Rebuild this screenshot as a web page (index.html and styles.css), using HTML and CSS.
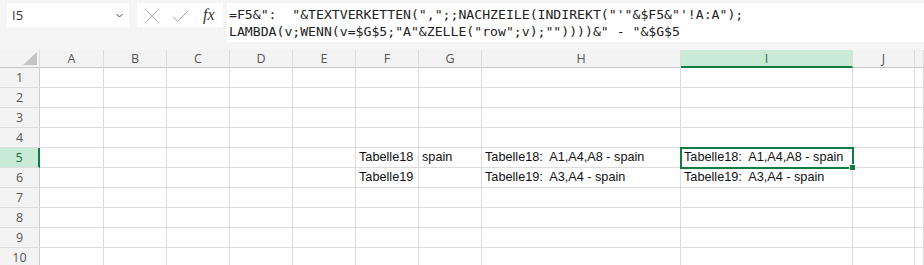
FILE: index.html
```html
<!DOCTYPE html>
<html lang="de">
<head>
  <meta charset="UTF-8" />
  <title>Tabelle</title>
  <link rel="stylesheet" href="styles.css">
</head>
<body>
  <!-- Name box + formula bar -->
  <div class="topbar">
    <div class="namebox">
      <span class="ref">I5</span>
      <svg class="chevron" width="7" height="5" viewBox="0 0 7 5"><path d="M0.5 1 L3.5 4 L6.5 1" fill="none" stroke="#444" stroke-width="1"/></svg>
    </div>
    <div class="fnbuttons">
      <svg width="55" height="24" viewBox="0 0 55 24">
        <path d="M0.5 7.5 L11.5 18.5 M11.5 7.5 L0.5 18.5" fill="none" stroke="#a6a6a6" stroke-width="1"/>
        <path d="M27 13.5 L31.5 18.5 L42 8" fill="none" stroke="#a6a6a6" stroke-width="1"/>
      </svg>
      <span class="fx">fx</span>
    </div>
    <div class="formula">
      <div class="fline">=F5&amp;":  "&amp;TEXTVERKETTEN(",";;NACHZEILE(INDIREKT("'"&amp;$F5&amp;"'!A:A");</div>
      <div class="fline">LAMBDA(v;WENN(v=$G$5;"A"&amp;ZELLE("row";v);""))))&amp;" - "&amp;$G$5</div>
    </div>
  </div>

  <!-- Sheet -->
  <div class="sheet">
    <div class="corner"><svg width="40" height="18" viewBox="0 0 40 18"><polygon points="23,15 37,15 37,2" fill="#c4c4c4"/></svg></div>
    <div class="colhead">A</div><div class="colhead">B</div><div class="colhead">C</div><div class="colhead">D</div><div class="colhead">E</div><div class="colhead">F</div><div class="colhead">G</div><div class="colhead">H</div><div class="colhead active">I</div><div class="colhead">J</div><div class="colhead"></div>

    <div class="rowhead">1</div><div class="cell"></div><div class="cell"></div><div class="cell"></div><div class="cell"></div><div class="cell"></div><div class="cell"></div><div class="cell"></div><div class="cell"></div><div class="cell"></div><div class="cell"></div><div class="cell"></div>
    <div class="rowhead">2</div><div class="cell"></div><div class="cell"></div><div class="cell"></div><div class="cell"></div><div class="cell"></div><div class="cell"></div><div class="cell"></div><div class="cell"></div><div class="cell"></div><div class="cell"></div><div class="cell"></div>
    <div class="rowhead">3</div><div class="cell"></div><div class="cell"></div><div class="cell"></div><div class="cell"></div><div class="cell"></div><div class="cell"></div><div class="cell"></div><div class="cell"></div><div class="cell"></div><div class="cell"></div><div class="cell"></div>
    <div class="rowhead">4</div><div class="cell"></div><div class="cell"></div><div class="cell"></div><div class="cell"></div><div class="cell"></div><div class="cell"></div><div class="cell"></div><div class="cell"></div><div class="cell"></div><div class="cell"></div><div class="cell"></div>
    <div class="rowhead active">5</div><div class="cell"></div><div class="cell"></div><div class="cell"></div><div class="cell"></div><div class="cell"></div><div class="cell">Tabelle18</div><div class="cell">spain</div><div class="cell">Tabelle18:  A1,A4,A8 - spain</div><div class="cell selected">Tabelle18:  A1,A4,A8 - spain</div><div class="cell"></div><div class="cell"></div>
    <div class="rowhead">6</div><div class="cell"></div><div class="cell"></div><div class="cell"></div><div class="cell"></div><div class="cell"></div><div class="cell">Tabelle19</div><div class="cell"></div><div class="cell">Tabelle19:  A3,A4 - spain</div><div class="cell">Tabelle19:  A3,A4 - spain</div><div class="cell"></div><div class="cell"></div>
    <div class="rowhead">7</div><div class="cell"></div><div class="cell"></div><div class="cell"></div><div class="cell"></div><div class="cell"></div><div class="cell"></div><div class="cell"></div><div class="cell"></div><div class="cell"></div><div class="cell"></div><div class="cell"></div>
    <div class="rowhead">8</div><div class="cell"></div><div class="cell"></div><div class="cell"></div><div class="cell"></div><div class="cell"></div><div class="cell"></div><div class="cell"></div><div class="cell"></div><div class="cell"></div><div class="cell"></div><div class="cell"></div>
    <div class="rowhead">9</div><div class="cell"></div><div class="cell"></div><div class="cell"></div><div class="cell"></div><div class="cell"></div><div class="cell"></div><div class="cell"></div><div class="cell"></div><div class="cell"></div><div class="cell"></div><div class="cell"></div>
    <div class="rowhead">10</div><div class="cell"></div><div class="cell"></div><div class="cell"></div><div class="cell"></div><div class="cell"></div><div class="cell"></div><div class="cell"></div><div class="cell"></div><div class="cell"></div><div class="cell"></div><div class="cell"></div>
  </div>
</body>
</html>
```

FILE: styles.css
```css
body {
  margin: 0;
  overflow: hidden;
  background: #fff;
  font-family: "Liberation Sans", Arial, sans-serif;
}

/* Name box and formula bar */
.topbar {
  display: flex;
  align-items: flex-start;
  height: 50px;
  padding: 3px 0 0 7px;
  box-sizing: border-box;
  background: #f5f5f5;
}

.namebox {
  display: flex;
  align-items: center;
  justify-content: space-between;
  width: 122px;
  height: 24px;
  padding: 0 6px 0 5px;
  box-sizing: border-box;
  background: #fff;
}

.ref {
  font-family: "Open Sans", sans-serif;
  font-size: 13px;
  color: #333;
}

.chevron {
  display: block;
}

.fnbuttons {
  display: flex;
  align-items: center;
  width: 86px;
  height: 24px;
  margin-left: 8px;
  padding-left: 9px;
  box-sizing: border-box;
  background: #fff;
}

.fnbuttons svg {
  display: block;
}

.fx {
  margin-left: 2px;
  font-family: "Liberation Serif", serif;
  font-style: italic;
  font-size: 16px;
  color: #333;
}

.formula {
  flex: 1;
  height: 39px;
  margin-left: 4px;
  padding: 3px 0 0 2px;
  box-sizing: border-box;
  background: #fff;
}

.fline {
  font-family: "DejaVu Sans Mono", monospace;
  font-size: 13.15px;
  line-height: 17px;
  color: #222;
  white-space: pre;
}

/* Grid */
.sheet {
  display: grid;
  grid-template-columns: 40px 64px 63px 63px 63px 63px 63px 63px 199px 172px 62px 9px;
  grid-template-rows: 18px;
  grid-auto-rows: 20px;
}

.corner,
.colhead {
  background: #f3f3f3;
  border-right: 1px solid #dcdcdc;
  border-bottom: 1px solid #c8c8c8;
  box-sizing: border-box;
}

.corner svg {
  display: block;
}

.colhead {
  font-family: "Open Sans", sans-serif;
  font-size: 12.5px;
  line-height: 17px;
  text-align: center;
  color: #555;
}

.colhead.active {
  background: #caead8;
  color: #17703f;
  border-bottom: 2px solid #107c41;
}

.rowhead {
  background: #f3f3f3;
  border-right: 1px solid #d0d0d0;
  border-bottom: 1px solid #dcdcdc;
  box-sizing: border-box;
  font-family: "Open Sans", sans-serif;
  font-size: 12.5px;
  line-height: 19px;
  text-align: center;
  color: #555;
}

.rowhead.active {
  background: #caead8;
  color: #17703f;
  border-right: 2px solid #107c41;
}

.cell {
  border-right: 1px solid #dcdcdc;
  border-bottom: 1px solid #dcdcdc;
  box-sizing: border-box;
  padding-left: 3px;
  font-size: 12.7px;
  line-height: 19px;
  color: #111;
  white-space: pre;
  overflow: visible;
}

.cell.selected {
  position: relative;
  outline: 2px solid #107c41;
  outline-offset: -1px;
}

.cell.selected::after {
  content: "";
  position: absolute;
  right: -4px;
  bottom: -4px;
  width: 5px;
  height: 5px;
  background: #107c41;
  border: 1px solid #fff;
}
```
